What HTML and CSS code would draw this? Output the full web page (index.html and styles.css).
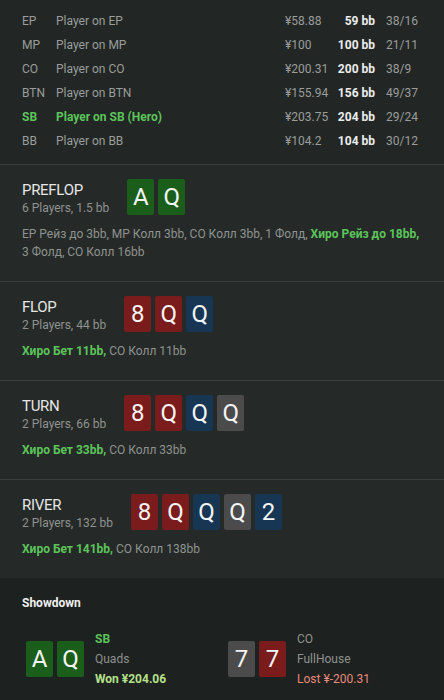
FILE: index.html
```html
<!DOCTYPE html>
<html>
<head>
<meta charset="utf-8">
<link rel="stylesheet" href="styles.css">
</head>
<body>
<div class="app">
  <div class="players">
    <div class="prow"><span class="pos">EP</span><span class="pname">Player on EP</span><span class="money">¥58.88</span><span class="bb">59 bb</span><span class="stat">38/16</span></div>
    <div class="prow"><span class="pos">MP</span><span class="pname">Player on MP</span><span class="money">¥100</span><span class="bb">100 bb</span><span class="stat">21/11</span></div>
    <div class="prow"><span class="pos">CO</span><span class="pname">Player on CO</span><span class="money">¥200.31</span><span class="bb">200 bb</span><span class="stat">38/9</span></div>
    <div class="prow"><span class="pos">BTN</span><span class="pname">Player on BTN</span><span class="money">¥155.94</span><span class="bb">156 bb</span><span class="stat">49/37</span></div>
    <div class="prow hero"><span class="pos">SB</span><span class="pname">Player on SB (Hero)</span><span class="money">¥203.75</span><span class="bb">204 bb</span><span class="stat">29/24</span></div>
    <div class="prow"><span class="pos">BB</span><span class="pname">Player on BB</span><span class="money">¥104.2</span><span class="bb">104 bb</span><span class="stat">30/12</span></div>
  </div>

  <div class="street">
    <div class="street-head">
      <div class="street-info">
        <div class="street-title">PREFLOP</div>
        <div class="street-sub">6 Players, 1.5 bb</div>
      </div>
      <div class="cards">
        <span class="card green">A</span><span class="card green">Q</span>
      </div>
    </div>
    <div class="actions">EP Рейз до 3bb, MP Колл 3bb, CO Колл 3bb, 1 Фолд, <b class="hero-act">Хиро Рейз до 18bb,</b><br>3 Фолд, CO Колл 16bb</div>
  </div>

  <div class="street">
    <div class="street-head">
      <div class="street-info">
        <div class="street-title">FLOP</div>
        <div class="street-sub">2 Players, 44 bb</div>
      </div>
      <div class="cards">
        <span class="card red">8</span><span class="card red">Q</span><span class="card blue">Q</span>
      </div>
    </div>
    <div class="actions"><b class="hero-act">Хиро Бет 11bb,</b> CO Колл 11bb</div>
  </div>

  <div class="street">
    <div class="street-head">
      <div class="street-info">
        <div class="street-title">TURN</div>
        <div class="street-sub">2 Players, 66 bb</div>
      </div>
      <div class="cards">
        <span class="card red">8</span><span class="card red">Q</span><span class="card blue">Q</span><span class="card gray">Q</span>
      </div>
    </div>
    <div class="actions"><b class="hero-act">Хиро Бет 33bb,</b> CO Колл 33bb</div>
  </div>

  <div class="street">
    <div class="street-head">
      <div class="street-info">
        <div class="street-title">RIVER</div>
        <div class="street-sub">2 Players, 132 bb</div>
      </div>
      <div class="cards">
        <span class="card red">8</span><span class="card red">Q</span><span class="card blue">Q</span><span class="card gray">Q</span><span class="card blue">2</span>
      </div>
    </div>
    <div class="actions"><b class="hero-act">Хиро Бет 141bb,</b> CO Колл 138bb</div>
  </div>

  <div class="showdown">
    <div class="sd-title">Showdown</div>
    <div class="hands">
      <div class="hand">
        <div class="cards">
          <span class="card green">A</span><span class="card green">Q</span>
        </div>
        <div class="hand-info">
          <div class="hand-pos winner">SB</div>
          <div class="hand-name">Quads</div>
          <div class="won">Won ¥204.06</div>
        </div>
      </div>
      <div class="hand">
        <div class="cards">
          <span class="card gray">7</span><span class="card red">7</span>
        </div>
        <div class="hand-info">
          <div class="hand-pos">CO</div>
          <div class="hand-name">FullHouse</div>
          <div class="lost">Lost ¥-200.31</div>
        </div>
      </div>
    </div>
  </div>
</div>
</body>
</html>
```

FILE: styles.css
```css
* { box-sizing: border-box; }
html, body { margin: 0; padding: 0; }
body {
  background: #1d211f;
  font-family: Roboto, "Open Sans", sans-serif;
  font-size: 12px;
  color: #9a9d9b;
  width: 444px;
  height: 700px;
  overflow: hidden;
}
.app { display: flex; flex-direction: column; }

.players {
  background: #222725;
  padding: 9px 0 11px 22px;
}
.prow {
  display: grid;
  grid-template-columns: 34px 229px 50px 40px auto;
  height: 24px;
  align-items: center;
  line-height: 16px;
}
.prow .bb { color: #ececec; font-weight: 700; text-align: right; }
.prow .stat { padding-left: 11px; }
.prow.hero .pos, .prow.hero .pname { color: #5cc45a; font-weight: 700; }

.street {
  background: #252a28;
  border-top: 1px solid #3a3f3d;
  padding: 14px 22px 20px;
}
.street-head {
  display: flex;
  align-items: flex-start;
  gap: 18px;
}
.street-info { padding-top: 1px; }
.street-title {
  font-size: 15px;
  letter-spacing: -0.3px;
  line-height: 20px;
  color: #e6e6e6;
}
.street-sub { line-height: 16px; color: #8f9290; }
.cards { display: flex; gap: 4px; }
.card {
  width: 27px;
  height: 36px;
  border-radius: 2px;
  display: flex;
  align-items: center;
  justify-content: center;
  color: #f4f4f4;
  font-size: 24px;
  line-height: 1;
}
.card.green { background: #1b5e1b; }
.card.red { background: #7a1c1c; }
.card.blue { background: #163653; }
.card.gray { background: #4b4b4b; }

.actions {
  margin-top: 9px;
  line-height: 18px;
  color: #8f9290;
  white-space: nowrap;
}
.hero-act { color: #5cc45a; font-weight: 700; }

.showdown {
  background: #1d211f;
  padding: 17px 22px 0;
}
.sd-title {
  color: #f0f0f0;
  font-weight: 700;
  line-height: 16px;
}
.hands {
  display: grid;
  grid-template-columns: 202px 1fr;
  padding: 18px 0 0 4px;
}
.hand { display: flex; align-items: center; gap: 11px; }
.hand-info { line-height: 20px; color: #8f9290; }
.hand-pos.winner { color: #5cc45a; font-weight: 700; }
.won { color: #b5e08a; font-weight: 700; }
.lost { color: #e88a7c; }
```
